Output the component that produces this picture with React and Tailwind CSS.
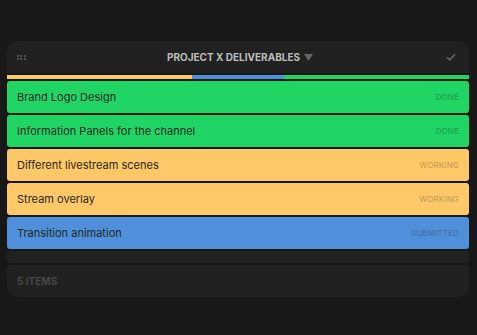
import React from "react";

const items = [
  { title: "Brand Logo Design", status: "DONE", color: "bg-[#21d565]", tone: "text-[#1a9c4c]" },
  { title: "Information Panels for the channel", status: "DONE", color: "bg-[#21d565]", tone: "text-[#1a9c4c]" },
  { title: "Different livestream scenes", status: "WORKING", color: "bg-[#fec767]", tone: "text-[#c39a50]" },
  { title: "Stream overlay", status: "WORKING", color: "bg-[#fec767]", tone: "text-[#c39a50]" },
  { title: "Transition animation", status: "SUBMITTED", color: "bg-[#508fd9]", tone: "text-[#3d6ea8]" },
];

export default function App() {
  return (
    <div className="min-h-[335px] bg-[#181818] pt-[41px] px-[7px] font-['Inter',sans-serif]">
      <div className="w-[462px] flex flex-col gap-[2px]">
        {/* header */}
        <div className="h-[32px] bg-[#212121] rounded-t-[10px] flex items-center px-[10px] relative">
          <div className="grid grid-cols-3 gap-[1px] w-[9px]">
            {[0, 1, 2, 3, 4, 5].map((i) => (
              <span key={i} className="w-[2px] h-[2px] bg-[#555]" />
            ))}
          </div>
          <div className="flex-1 flex items-center justify-center gap-[4px] pl-[8px] text-[10px] font-bold text-[#bdbdbd]">
            PROJECT X DELIVERABLES
            <svg width="9" height="7" viewBox="0 0 9 7">
              <path d="M0 0h9L4.5 7z" fill="#666" />
            </svg>
          </div>
          <svg width="10" height="8" viewBox="0 0 10 8" className="mr-[3px]">
            <path d="M1 4.2l2.6 2.6L9 1.2" stroke="#666" strokeWidth="1.6" fill="none" />
          </svg>
        </div>

        {/* progress */}
        <div className="h-[4px] flex">
          <div className="w-[40%] bg-[#fec767]" />
          <div className="w-[20%] bg-[#508fd9]" />
          <div className="w-[40%] bg-[#21d565]" />
        </div>

        {items.map((item) => (
          <div
            key={item.title}
            className={`${item.color} h-[32px] rounded-[3px] flex items-center justify-between pl-[10px] pr-[10px]`}
          >
            <span className="text-[11px] text-[#1f2a24]">{item.title}</span>
            <span className={`${item.tone} text-[8px] tracking-[0.02em]`}>{item.status}</span>
          </div>
        ))}

        <div className="h-[12px] bg-[#212121] rounded-[3px]" />

        <div className="h-[32px] bg-[#212121] rounded-t-[3px] rounded-b-[10px] flex items-center px-[10px]">
          <span className="text-[10px] font-bold text-[#474747]">5 ITEMS</span>
        </div>
      </div>
    </div>
  );
}
